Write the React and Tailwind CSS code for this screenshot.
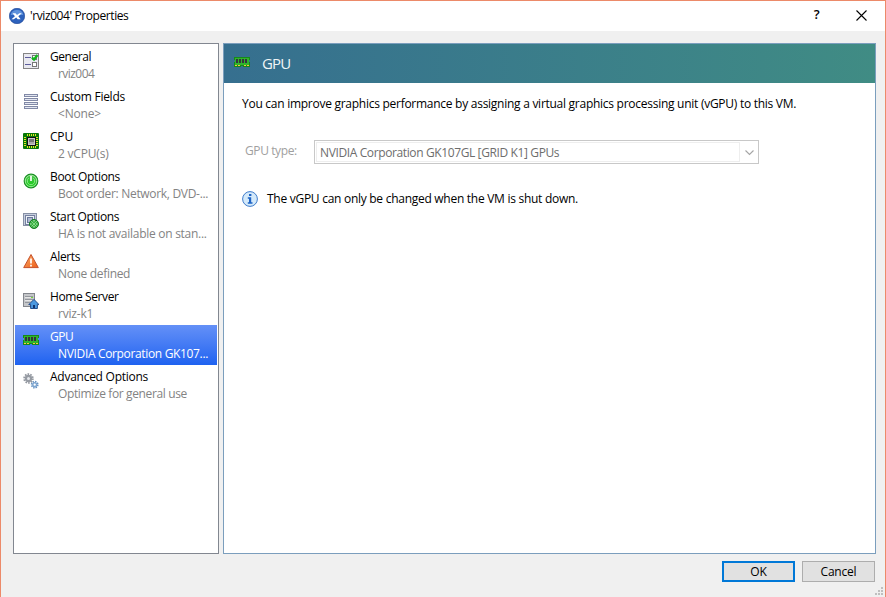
import React from "react";

const Svg = ({ children, className = "" }) => (
  <svg viewBox="0 0 16 16" className={`h-4 w-4 shrink-0 ${className}`}>
    {children}
  </svg>
);

const GeneralIcon = () => (
  <Svg>
    <rect x=".5" y=".5" width="15" height="15" fill="#e9e9f0" stroke="#858585" />
    <path d="M2 4.5h6M2 11.5h6" stroke="#5d5d9c" />
    <rect x="9.5" y="2.5" width="4" height="4" fill="#fff" stroke="#777" />
    <rect x="9.5" y="9.5" width="4" height="4" fill="#fff" stroke="#777" />
    <path d="M9 4.5l2 2L14.5 2" fill="none" stroke="#12b81c" strokeWidth="2.4" />
  </Svg>
);

const FieldsIcon = () => (
  <Svg>
    {[1, 5, 9, 13].map((y) => (
      <g key={y}>
        <rect x="1" y={y} width="14" height="3" fill="#8189a6" />
        <rect x="2" y={y + 1} width="12" height="1" fill="#e2e6f1" />
      </g>
    ))}
  </Svg>
);

const CpuIcon = () => (
  <Svg>
    <rect width="16" height="16" rx="1" fill="#087808" />
    <path d="M4 1h1v2H4zM6 1h1v2H6zM8 1h1v2H8zM10 1h1v2h-1zM12 1h1v2h-1zM4 13h1v2H4zM6 13h1v2H6zM8 13h1v2H8zM10 13h1v2h-1zM12 13h1v2h-1zM1 4h2v1H1zM1 6h2v1H1zM1 8h2v1H1zM1 10h2v1H1zM1 12h2v1H1zM13 4h2v1h-2zM13 6h2v1h-2zM13 8h2v1h-2zM13 10h2v1h-2zM13 12h2v1h-2z" fill="#e0e526" />
    <rect x="4" y="4" width="9" height="9" fill="#111" />
    <rect x="5.5" y="5.5" width="6" height="6" fill="#777" stroke="#c9c9c9" />
    <path d="M6 9h5v2H6z" fill="#aaa" />
  </Svg>
);

const PowerIcon = () => (
  <Svg>
    <defs>
      <linearGradient id="power" x1="0" y1="0" x2="0" y2="1">
        <stop stopColor="#4fc04f" />
        <stop offset="1" stopColor="#10d012" />
      </linearGradient>
    </defs>
    <circle cx="8" cy="8" r="6.8" fill="url(#power)" stroke="#1c9026" strokeWidth="1.2" />
    <circle cx="8" cy="8" r="5.7" fill="none" stroke="#b5efb2" strokeWidth=".8" />
    <path d="M5.6 5.2a3.7 3.7 0 1 0 4.8 0" fill="none" stroke="#8ee78a" strokeWidth="1" />
    <path d="M8 3v5" stroke="#fff" strokeWidth="1.7" />
  </Svg>
);

const StartIcon = () => (
  <Svg>
    <rect x=".5" y=".5" width="13" height="12" fill="#c6cede" stroke="#8790a5" />
    <rect x="2.5" y="2.5" width="9" height="9" fill="#edf1f7" stroke="#7681a0" />
    <rect x="4.5" y="4.5" width="5" height="5" fill="#aeb9d0" stroke="#6a789b" />
    <circle cx="11" cy="11" r="4.5" fill="#35ae3e" stroke="#167a22" />
    <path d="M8.5 8.5l5 5M13.5 8.5l-5 5M11 7v2M11 13v2M7 11h2M13 11h2" stroke="#c4efc4" strokeWidth="1" strokeDasharray="1.5 .7" />
    <circle cx="11" cy="11" r="1.2" fill="#7ddb82" />
  </Svg>
);

const AlertIcon = () => (
  <Svg>
    <defs>
      <linearGradient id="alert" x1="0" y1="0" x2="1" y2="1">
        <stop stopColor="#f8ad69" />
        <stop offset="1" stopColor="#ee5d18" />
      </linearGradient>
    </defs>
    <path d="M8 1.5L15.3 14.6H.7z" fill="url(#alert)" stroke="#c5502b" strokeLinejoin="round" />
    <path d="M8 5.5v5M8 11.8v1.6" stroke="#fff" strokeWidth="1.7" />
  </Svg>
);

const HomeIcon = () => (
  <Svg>
    <rect x=".5" y=".5" width="11" height="13" fill="#c5c7ca" stroke="#83868c" />
    <path d="M2 3.5h8M2 6.5h8M2 9.5h5" stroke="#94979d" />
    <path d="M2 4.5h8M2 7.5h7" stroke="#e6e6e6" />
    <path d="M8 4.5h2" stroke="#75d83b" />
    <path d="M5.8 11.6L11 6.4l5 5.2h-1.6v3.9H7.6v-3.9z" fill="#4a98e0" stroke="#153f83" strokeWidth=".9" />
    <path d="M10 12h2v3h-2z" fill="#12346f" />
  </Svg>
);

const GpuIcon = ({ className }) => (
  <Svg className={className}>
    <path d="M0 2h16v3h-1v2h1v5H9v-1H7v1H0V7h1V5H0z" fill="#16891a" />
    <path d="M1 3h14v7H1z" fill="#2fb52b" />
    <path d="M2 4h2v4H2zM5 4h2v4H5zM8 4h2v4H8zM11 4h2v4h-2z" fill="#33343c" />
    <path d="M1 10h2v1H1zM4 10h2v1H4zM10 10h2v1h-2zM13 10h2v1h-2z" fill="#f5c93c" />
  </Svg>
);

const GearsIcon = () => (
  <Svg>
    <circle cx="5.5" cy="5.5" r="4.4" fill="none" stroke="#92979f" strokeWidth="1.7" strokeDasharray="1.6 1.15" />
    <circle cx="5.5" cy="5.5" r="2.6" fill="#e5e7eb" stroke="#969ba3" strokeWidth="2.2" />
    <circle cx="11.7" cy="11.7" r="3.1" fill="none" stroke="#6591c2" strokeWidth="1.6" strokeDasharray="1.4 1.03" />
    <circle cx="11.7" cy="11.7" r="1.9" fill="#fff" stroke="#7ea6d0" strokeWidth="1.5" />
  </Svg>
);

const items = [
  ["General", "rviz004", GeneralIcon, "tracking-[-0.45px]", "tracking-[-0.55px]"],
  ["Custom Fields", "<None>", FieldsIcon, "tracking-[-0.27px]", "tracking-[-0.2px]"],
  ["CPU", "2 vCPU(s)", CpuIcon, "tracking-[-0.2px]", "tracking-[-0.2px]"],
  ["Boot Options", "Boot order: Network, DVD-...", PowerIcon, "tracking-[-0.32px]", "tracking-[-0.31px]"],
  ["Start Options", "HA is not available on stan...", StartIcon, "tracking-[-0.38px]", "tracking-[-0.27px]"],
  ["Alerts", "None defined", AlertIcon, "tracking-[-0.35px]", "tracking-[-0.33px]"],
  ["Home Server", "rviz-k1", HomeIcon, "tracking-[-0.4px]", "tracking-[-0.2px]"],
  ["GPU", "NVIDIA Corporation GK107...", GpuIcon, "tracking-[-0.5px]", "tracking-[-0.34px]"],
  ["Advanced Options", "Optimize for general use", GearsIcon, "tracking-[-0.26px]", "tracking-[-0.37px]"],
];

function Sidebar() {
  return (
    <nav className="h-[511px] w-[206px] shrink-0 border border-[#828790] bg-white p-px">
      {items.map(([title, detail, Icon, titleSpacing, detailSpacing]) => {
        const active = title === "GPU";
        return (
          <div key={title} className={`flex h-10 pl-2 ${active ? "bg-linear-to-b from-[#6490f7] to-[#1e62f0] text-white" : ""}`}>
            <div className="pt-2"><Icon /></div>
            <div className="pt-[3px] pl-[11px] leading-[17px] whitespace-nowrap">
              <div><span className={titleSpacing}>{title}</span></div>
              <div className={`pl-2 ${active ? "" : "text-[#838383]"}`}><span className={detailSpacing}>{detail}</span></div>
            </div>
          </div>
        );
      })}
    </nav>
  );
}

export default function App() {
  return (
    <div className="flex h-[597px] w-[886px] flex-col overflow-hidden border border-b-0 border-[#ec8a69] bg-[#f0f0f0] font-['Open_Sans','Noto_Sans',sans-serif] text-[12px] tracking-[-0.2px] text-black">
      <header className="flex h-[30px] shrink-0 items-center bg-white pl-2">
        <Svg className="-mt-px">
          <circle cx="8" cy="8" r="7.7" fill="#2d62bd" stroke="#173f91" strokeWidth=".6" />
          <path d="M1.7 7a6.4 6 0 0 1 12.6 0z" fill="#5f92dc" />
          <path d="M3.5 5.3h3L8 7l2.4-1.8h2.4L9.3 8.3l2.4 2.9h-3L7.2 9.4l-2.4 1.8H2.6l3.3-3z" fill="#fff" />
        </Svg>
        <span className="ml-[5px] tracking-[-0.41px]">'rviz004' Properties</span>
        <span className="mr-px ml-auto w-[45px] pb-[2px] text-center text-[13px] font-semibold">?</span>
        <svg viewBox="0 0 11 11" className="mr-[18px] ml-[16px] -mt-px h-[11px] w-[11px]">
          <path d="M.5.5l10 10M10.5.5l-10 10" stroke="#000" strokeWidth="1.1" />
        </svg>
      </header>
      <main className="flex gap-1 pt-3 pl-3">
        <Sidebar />
        <section className="h-[511px] w-[653px] border border-[#7b9ebd] bg-white">
          <div className="flex h-[39px] items-center bg-linear-to-r from-[#366f8f] to-[#408c84] pl-[10px] text-white">
            <GpuIcon className="-mt-px" />
            <span className="ml-3 text-[15px] tracking-[-0.8px] text-[#f0f5f6]">GPU</span>
          </div>
          <p className="mt-[13px] ml-[18px] leading-4 tracking-[-0.268px] whitespace-nowrap">You can improve graphics performance by assigning a virtual graphics processing unit (vGPU) to this VM.</p>
          <div className="mt-7 flex pl-[21px]">
            <span className="w-[69px] pt-[3px] leading-4 tracking-[-0.4px] text-[#a0a0a0]">GPU type:</span>
            <div className="flex h-6 w-[445px] border border-[#c8c8c8] p-px">
              <div className="flex w-[424px] items-center border border-[#eeeeee] pt-px pl-[3px] tracking-[-0.38px] text-[#6d6d6d]">NVIDIA Corporation GK107GL [GRID K1] GPUs</div>
              <svg viewBox="0 0 9 6" className="mt-[8px] ml-[5px] h-[6px] w-[9px]"><path d="M.5.5l4 4 4-4" fill="none" stroke="#a5a5a5" strokeWidth="1.1" /></svg>
            </div>
          </div>
          <div className="mt-[26px] flex items-center pl-[18px]">
            <Svg>
              <circle cx="8" cy="8" r="7.4" fill="#d3e9fa" stroke="#3f7ccb" />
              <path d="M7 3h2.4v2H7zM5.8 6.3h3.4v5h1.3v1.4H5.8v-1.4H7V7.7H5.8z" fill="#1e63c5" />
            </Svg>
            <span className="ml-[9px] tracking-[-0.275px]">The vGPU can only be changed when the VM is shut down.</span>
          </div>
        </section>
      </main>
      <footer className="flex gap-[7px] pt-[7px] pl-[721px]">
        <button className="h-[21px] w-[73px] border-2 border-[#0078d7] bg-[#e1e1e1] leading-4">OK</button>
        <button className="h-[21px] w-[73px] border border-[#adadad] bg-[#e1e1e1] leading-4">Cancel</button>
      </footer>
      <svg viewBox="0 0 8 8" className="mt-[5px] mr-[2px] h-2 w-2 shrink-0 self-end">
        <path d="M6 0h2v2H6zM3 3h2v2H3zM6 3h2v2H6zM0 6h2v2H0zM3 6h2v2H3zM6 6h2v2H6z" fill="#bfbfbf" />
      </svg>
    </div>
  );
}
